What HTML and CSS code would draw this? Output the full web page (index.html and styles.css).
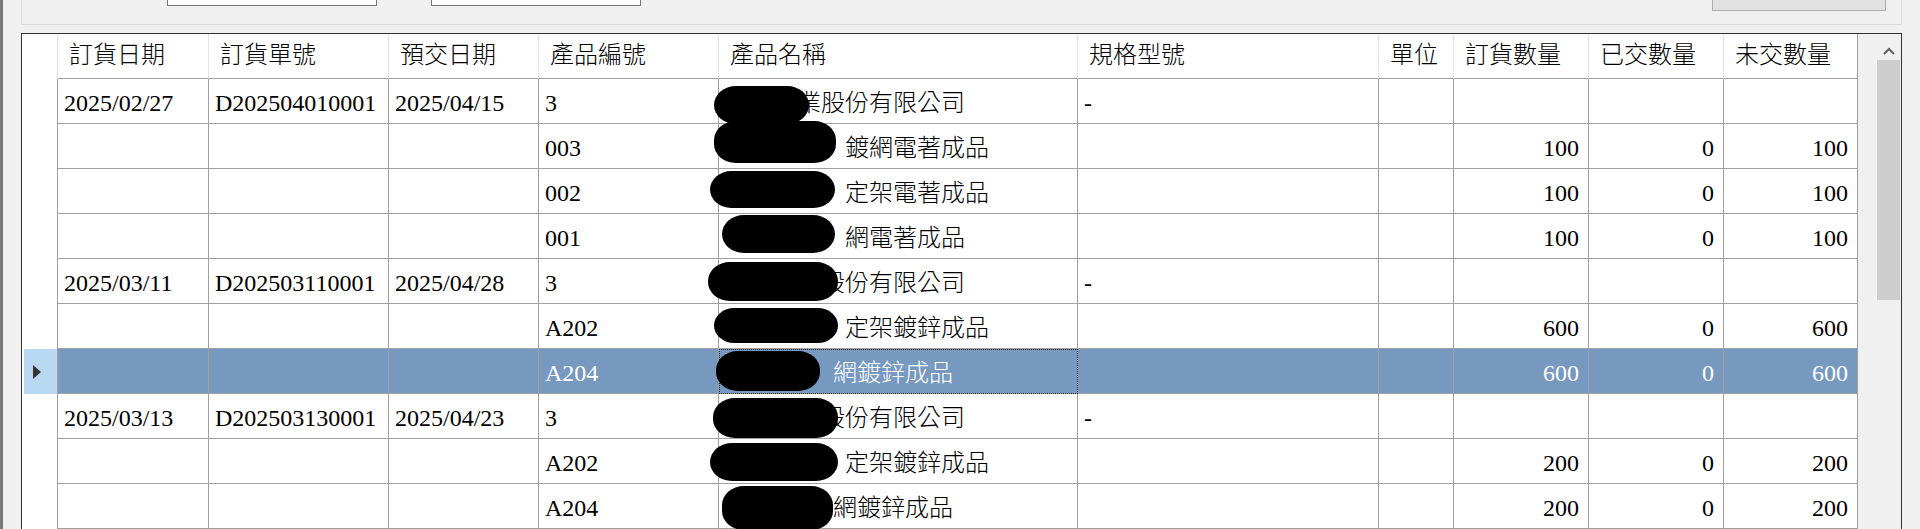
FILE: index.html
```html
<!DOCTYPE html>
<html lang="zh-Hant">
<head>
<meta charset="utf-8">
<title>訂單明細</title>
<link rel="stylesheet" href="styles.css">
</head>
<body>
<div class="screen">
  <div class="toolbar">
    <div class="textbox tb1"></div>
    <div class="textbox tb2"></div>
    <div class="btn"></div>
  </div>
  <div class="grid-frame">
    <div class="grid">
      <div class="row head">
        <div class="c rh"></div>
        <div class="c">訂貨日期</div>
        <div class="c">訂貨單號</div>
        <div class="c">預交日期</div>
        <div class="c">產品編號</div>
        <div class="c">產品名稱</div>
        <div class="c">規格型號</div>
        <div class="c">單位</div>
        <div class="c">訂貨數量</div>
        <div class="c">已交數量</div>
        <div class="c">未交數量</div>
      </div>
      <div class="row">
        <div class="c rh"></div>
        <div class="c">2025/02/27</div>
        <div class="c">D202504010001</div>
        <div class="c">2025/04/15</div>
        <div class="c">3</div>
        <div class="c name">　　　業股份有限公司<span class="blob b1"></span></div>
        <div class="c">-</div>
        <div class="c"></div>
        <div class="c num"></div>
        <div class="c num"></div>
        <div class="c num"></div>
      </div>
      <div class="row">
        <div class="c rh"></div>
        <div class="c"></div>
        <div class="c"></div>
        <div class="c"></div>
        <div class="c">003</div>
        <div class="c name">　　　　　鍍網電著成品<span class="blob b2"></span></div>
        <div class="c"></div>
        <div class="c"></div>
        <div class="c num">100</div>
        <div class="c num">0</div>
        <div class="c num">100</div>
      </div>
      <div class="row">
        <div class="c rh"></div>
        <div class="c"></div>
        <div class="c"></div>
        <div class="c"></div>
        <div class="c">002</div>
        <div class="c name">　　　　　定架電著成品<span class="blob b3"></span></div>
        <div class="c"></div>
        <div class="c"></div>
        <div class="c num">100</div>
        <div class="c num">0</div>
        <div class="c num">100</div>
      </div>
      <div class="row">
        <div class="c rh"></div>
        <div class="c"></div>
        <div class="c"></div>
        <div class="c"></div>
        <div class="c">001</div>
        <div class="c name">　　　　　網電著成品<span class="blob b4"></span></div>
        <div class="c"></div>
        <div class="c"></div>
        <div class="c num">100</div>
        <div class="c num">0</div>
        <div class="c num">100</div>
      </div>
      <div class="row">
        <div class="c rh"></div>
        <div class="c">2025/03/11</div>
        <div class="c">D202503110001</div>
        <div class="c">2025/04/28</div>
        <div class="c">3</div>
        <div class="c name">　　　業股份有限公司<span class="blob b5"></span></div>
        <div class="c">-</div>
        <div class="c"></div>
        <div class="c num"></div>
        <div class="c num"></div>
        <div class="c num"></div>
      </div>
      <div class="row">
        <div class="c rh"></div>
        <div class="c"></div>
        <div class="c"></div>
        <div class="c"></div>
        <div class="c">A202</div>
        <div class="c name">　　　　　定架鍍鋅成品<span class="blob b6"></span></div>
        <div class="c"></div>
        <div class="c"></div>
        <div class="c num">600</div>
        <div class="c num">0</div>
        <div class="c num">600</div>
      </div>
      <div class="row selected">
        <div class="c rh"><span class="arrow"></span></div>
        <div class="c"></div>
        <div class="c"></div>
        <div class="c"></div>
        <div class="c">A204</div>
        <div class="c name focus">　　　　&ensp;網鍍鋅成品<span class="blob b7"></span></div>
        <div class="c"></div>
        <div class="c"></div>
        <div class="c num">600</div>
        <div class="c num">0</div>
        <div class="c num">600</div>
      </div>
      <div class="row">
        <div class="c rh"></div>
        <div class="c">2025/03/13</div>
        <div class="c">D202503130001</div>
        <div class="c">2025/04/23</div>
        <div class="c">3</div>
        <div class="c name">　　　業股份有限公司<span class="blob b8"></span></div>
        <div class="c">-</div>
        <div class="c"></div>
        <div class="c num"></div>
        <div class="c num"></div>
        <div class="c num"></div>
      </div>
      <div class="row">
        <div class="c rh"></div>
        <div class="c"></div>
        <div class="c"></div>
        <div class="c"></div>
        <div class="c">A202</div>
        <div class="c name">　　　　　定架鍍鋅成品<span class="blob b9"></span></div>
        <div class="c"></div>
        <div class="c"></div>
        <div class="c num">200</div>
        <div class="c num">0</div>
        <div class="c num">200</div>
      </div>
      <div class="row">
        <div class="c rh"></div>
        <div class="c"></div>
        <div class="c"></div>
        <div class="c"></div>
        <div class="c">A204</div>
        <div class="c name">　　　　&ensp;網鍍鋅成品<span class="blob b10"></span></div>
        <div class="c"></div>
        <div class="c"></div>
        <div class="c num">200</div>
        <div class="c num">0</div>
        <div class="c num">200</div>
      </div>
    </div>
    <div class="vscroll">
      <svg class="up" width="12" height="8" viewBox="0 0 12 8"><path d="M1 7 L6 2 L11 7" fill="none" stroke="#606060" stroke-width="2"/></svg>
      <div class="thumb"></div>
    </div>
  </div>
</div>
</body>
</html>
```
FILE: styles.css
```css
* { box-sizing: border-box; }
html, body { margin: 0; padding: 0; }
body {
  background: #f0f0f0;
  font-family: "Liberation Serif", "Noto Sans CJK TC", serif;
  font-size: 24px;
  font-weight: 300;
  color: #000;
}
.screen {
  width: 1920px;
  height: 529px;
  overflow: hidden;
  border-left: 3px solid #7a7a7a;
  background: #f0f0f0;
}
.toolbar {
  margin-left: 18px;
  width: 1881px;
  height: 25px;
  border: 1px solid #dcdcdc;
  border-top: none;
  display: flex;
  align-items: flex-start;
}
.textbox {
  width: 210px;
  height: 30px;
  margin-top: -24px;
  background: #fff;
  border: 1px solid #7a7a7a;
}
.tb1 { margin-left: 145px; }
.tb2 { margin-left: 54px; }
.btn {
  margin-left: 1071px;
  width: 174px;
  height: 30px;
  margin-top: -19px;
  background: #e1e1e1;
  border: 1px solid #adadad;
}
.grid-frame {
  margin-top: 8px;
  margin-left: 18px;
  width: 1881px;
  height: 520px;
  border: 1px solid #333;
  border-bottom: none;
  display: flex;
  background: #f0f0f0;
}
.grid {
  width: 1836px;
  background: #fff;
}
.row {
  display: grid;
  grid-template-columns: 36px 151px 180px 150px 180px 359px 301px 75px 135px 135px 134px;
  height: 45px;
}
.c {
  border-right: 1px solid #a0a0a0;
  border-bottom: 1px solid #a0a0a0;
  padding: 5px 6px 0 6px;
  line-height: 38px;
  white-space: nowrap;
  overflow: hidden;
  position: relative;
}
.c.rh {
  border-bottom: none;
  padding: 0;
  display: flex;
  align-items: center;
}
.head .c {
  border-right-color: #e3e3e3;
  padding-left: 11px;
  padding-top: 2px;
}
.head .c.rh { border-right-color: #e3e3e3; }
.head .c:last-child { border-right-color: #a0a0a0; }
.num { text-align: right; padding-right: 9px; }
.name { overflow: visible; }
.selected .c { background: #7799c0; color: #fff; }
.selected .c.rh { background: #b9d9f3; margin-left: 2px; }
.arrow {
  margin-left: 9px;
  width: 0; height: 0;
  border-top: 7px solid transparent;
  border-bottom: 7px solid transparent;
  border-left: 8px solid #333;
}
.focus { outline: 1px dotted #222; outline-offset: -1px; }
.blob {
  position: absolute;
  background: #000;
  border-radius: 22px / 19px;
  z-index: 2;
}
.b1 { left: -5px; top: 7px; width: 95px; height: 38px; }
.b2 { left: -5px; top: -3px; width: 122px; height: 42px; }
.b3 { left: -9px; top: 2px; width: 125px; height: 37px; }
.b4 { left: 3px; top: 1px; width: 113px; height: 38px; }
.b5 { left: -11px; top: 3px; width: 130px; height: 39px; }
.b6 { left: -5px; top: 4px; width: 124px; height: 35px; }
.b7 { left: -3px; top: 2px; width: 104px; height: 40px; }
.b8 { left: -6px; top: 4px; width: 125px; height: 40px; }
.b9 { left: -9px; top: 4px; width: 128px; height: 38px; }
.b10 { left: 3px; top: 2px; width: 111px; height: 44px; }
.vscroll {
  width: 43px;
  position: relative;
  background: #f0f0f0;
  display: flex;
  flex-direction: column;
  align-items: flex-end;
}
.up { margin: 13px 6px 0 0; }
.thumb {
  margin-top: 5px;
  margin-right: 1px;
  width: 23px;
  height: 240px;
  background: #cdcdcd;
}
```
